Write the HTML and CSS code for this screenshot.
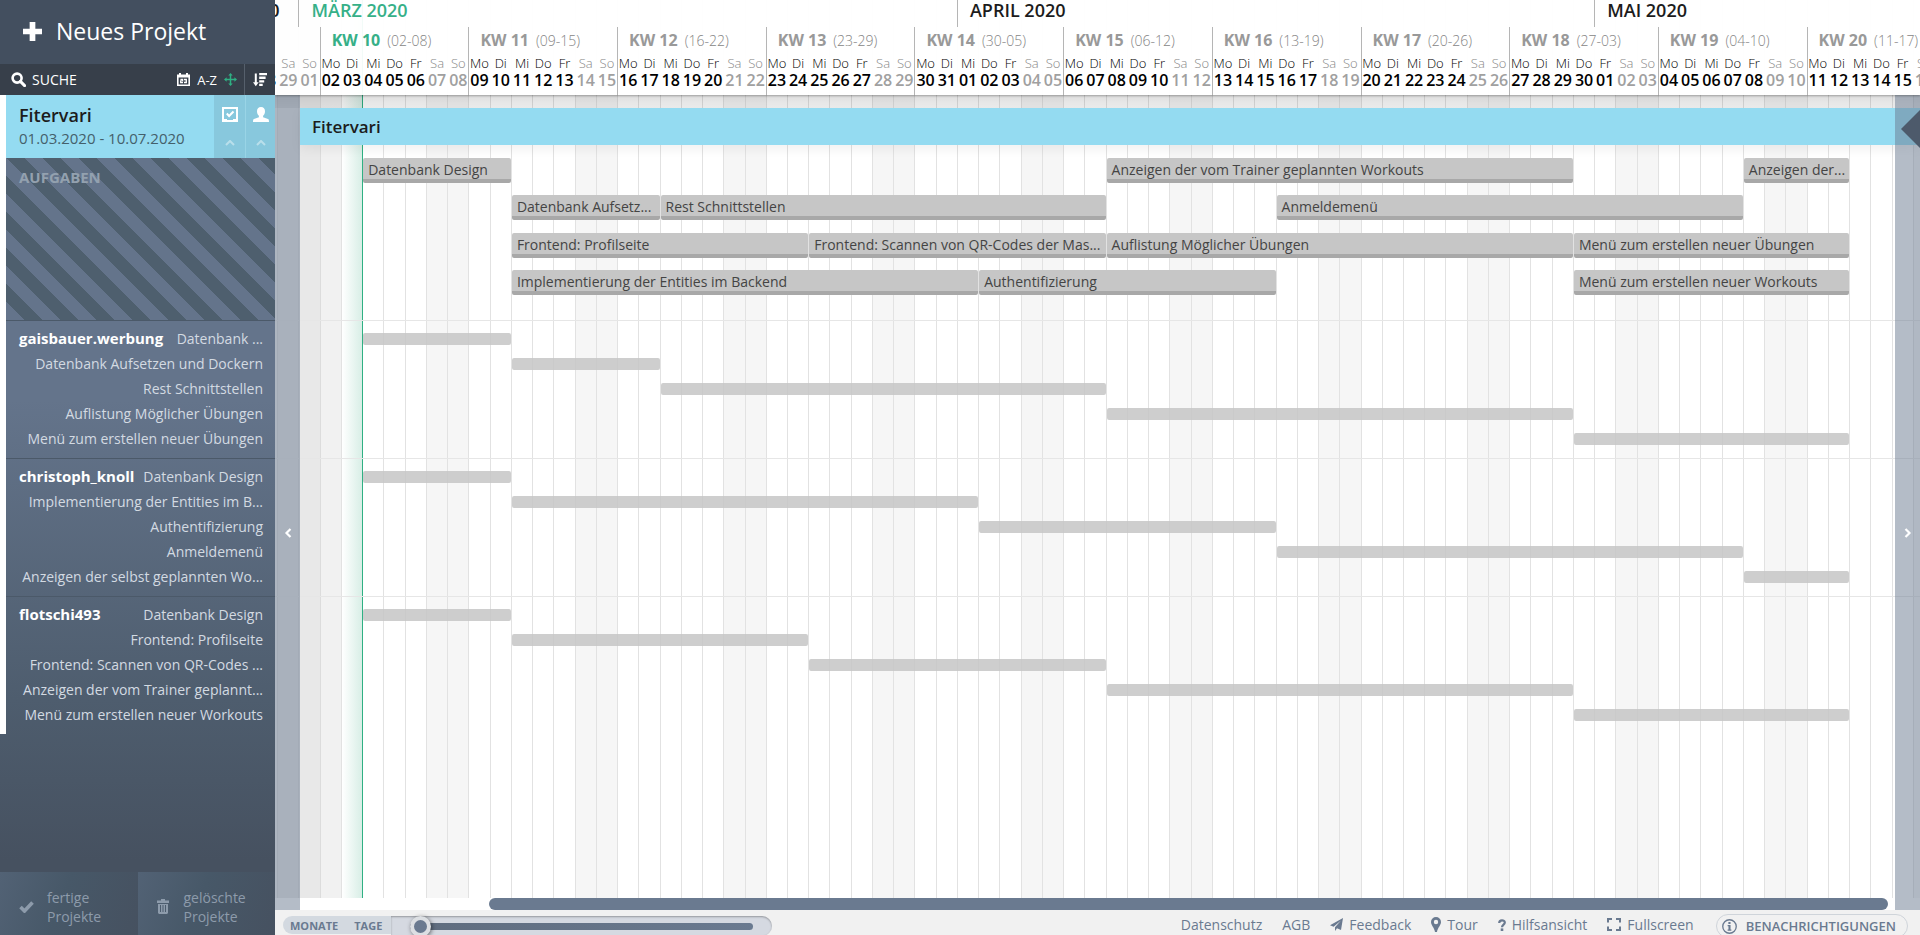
FILE: index.html
```html
<!DOCTYPE html>
<html lang="de">
<head>
<meta charset="utf-8">
<title>Fitervari – Projektplan</title>
<link rel="stylesheet" href="styles.css">
</head>
<body>
<div class="app">
  <aside class="sidebar">
    <button class="new-project" type="button">
      <svg class="plus" viewBox="0 0 20 20"><path d="M7 0h6v7h7v6h-7v7H7v-7H0V7h7z"/></svg>
      Neues Projekt
    </button>
    <div class="search">
      <label class="search-field">
        <svg viewBox="0 0 16 16" width="15" height="15"><circle cx="6.5" cy="6.5" r="4.8" fill="none" stroke="currentColor" stroke-width="2.8"/><path d="M10 10l4.5 4.5" stroke="currentColor" stroke-width="3.2" stroke-linecap="round"/></svg>
        <input type="text" placeholder="SUCHE" aria-label="Suche">
      </label>
      <button type="button" aria-label="Nach Datum sortieren">
        <svg viewBox="0 0 13 13" width="13" height="13"><path fill="currentColor" fill-rule="evenodd" d="M0 1.500h2V0h2v1.500h5V0h2v1.500h2V13H0zM1.600 4.600v6.800h9.800V4.600z"/><path d="M3.400 6.400h2.300v1.500H3.600v1.700h2.400M7 6.400h2.400v3.200H7M7.400 8h2" fill="none" stroke="currentColor" stroke-width="1.100"/></svg>
      </button>
      <button type="button">A-Z</button>
      <button class="active" type="button" aria-label="Manuell sortieren">
        <svg viewBox="0 0 14 14" width="13" height="13"><path fill="currentColor" d="M7 0l2.400 2.800H7.800v3.400h3.400V4.600L14 7l-2.800 2.400V7.800H7.800v3.400h1.600L7 14l-2.400-2.800h1.600V7.800H2.800v1.600L0 7l2.800-2.400v1.600h3.400V2.800H4.600z"/></svg>
      </button>
      <button class="sort" type="button" aria-label="Sortierung">
        <svg viewBox="0 0 14 14" width="14" height="14"><path fill="currentColor" d="M1.800 0.500h2v8.800h1.900L2.800 13.200 0 9.300h1.800zM6.200 0h7.800v2.300H6.200zM6.200 3.600h6.400v2.300H6.200zM6.200 7.200h5v2.300h-5zM6.200 10.800h3.500v2.300H6.200z"/></svg>
      </button>
    </div>

    <div class="project">
      <div class="project-head">
        <div class="project-info">
          <div class="project-name">Fitervari</div>
          <div class="project-dates">01.03.2020 - 10.07.2020</div>
        </div>
        <button class="toggle" type="button" aria-label="Aufgaben einklappen">
          <svg viewBox="0 0 16 15" width="16" height="15"><path fill="#fff" fill-rule="evenodd" d="M0 0h16v15H0zM2 2v10h3v1h6v-1h3V2z"/><path d="M4.800 6.500l2.300 2.500 4.400-4.500" fill="none" stroke="#fff" stroke-width="2"/></svg>
          <svg viewBox="0 0 10 6" width="10" height="6"><path d="M1 5l4-4 4 4" fill="none" stroke="#b9dfeb" stroke-width="2"/></svg>
        </button>
        <button class="toggle" type="button" aria-label="Personen einklappen">
          <svg viewBox="0 0 16 15" width="16" height="15"><path fill="#fff" d="M8 0c2.600 0 4 1.800 4 4.300 0 1.900-.8 3.700-1.900 4.500v1.400L15 12c.7.300 1 1 1 3H0c0-2 .3-2.700 1-3l4.900-1.800V8.800C4.800 8 4 6.200 4 4.300 4 1.800 5.400 0 8 0z"/></svg>
          <svg viewBox="0 0 10 6" width="10" height="6"><path d="M1 5l4-4 4 4" fill="none" stroke="#b9dfeb" stroke-width="2"/></svg>
        </button>
      </div>
      <div class="tasks-label">AUFGABEN</div>
      <section class="person">
        <h3>gaisbauer.werbung</h3>
        <ul>
          <li>Datenbank ...</li>
          <li>Datenbank Aufsetzen und Dockern</li>
          <li>Rest Schnittstellen</li>
          <li>Auflistung Möglicher Übungen</li>
          <li>Menü zum erstellen neuer Übungen</li>
        </ul>
      </section>
      <section class="person">
        <h3>christoph_knoll</h3>
        <ul>
          <li>Datenbank Design</li>
          <li>Implementierung der Entities im B...</li>
          <li>Authentifizierung</li>
          <li>Anmeldemenü</li>
          <li>Anzeigen der selbst geplannten Wo...</li>
        </ul>
      </section>
      <section class="person">
        <h3>flotschi493</h3>
        <ul>
          <li>Datenbank Design</li>
          <li>Frontend: Profilseite</li>
          <li>Frontend: Scannen von QR-Codes ...</li>
          <li>Anzeigen der vom Trainer geplannt...</li>
          <li>Menü zum erstellen neuer Workouts</li>
        </ul>
      </section>
    </div>

    <div class="archive">
      <button type="button">
        <svg viewBox="0 0 15 12" width="15" height="12"><path d="M1.500 6l4 4 8-8.500" fill="none" stroke="currentColor" stroke-width="3.600"/></svg>
        <span>fertige Projekte</span>
      </button>
      <button type="button">
        <svg viewBox="0 0 12 15" width="12" height="15"><path fill="currentColor" fill-rule="evenodd" d="M4 0h4v1.500h4V4H0V1.500h4zM1 5h10v9l-1 1H2l-1-1zM3 6v7h1V6zM5.500 6v7h1V6zM8 6v7h1V6z"/></svg>
        <span>gelöschte Projekte</span>
      </button>
    </div>
  </aside>

  <main class="main">
    <div class="timeline">
      <div class="days-bg track" id="days-bg"></div>

      <header class="calendar">
        <div class="months track" id="months"></div>
        <div class="weeks track" id="weeks"></div>
        <div class="days track" id="days"></div>
      </header>

      <div class="chart">
        <div class="project-bar">Fitervari</div>
        <div class="tasks track" id="tasks"></div>
        <div class="lanes track" data-person="0"></div>
        <div class="lanes track" data-person="1"></div>
        <div class="lanes track" data-person="2"></div>
      </div>

      <div class="scrollbar"><div class="thumb"></div></div>
      <button class="edge edge-left" type="button" aria-label="Zurück">
        <svg viewBox="0 0 8 10" width="8" height="10"><path d="M6.500 1L2.500 5l4 4" fill="none" stroke="#fff" stroke-width="2.200"/></svg>
      </button>
      <button class="edge edge-right" type="button" aria-label="Weiter">
        <svg viewBox="0 0 8 10" width="8" height="10"><path d="M1.500 1l4 4-4 4" fill="none" stroke="#fff" stroke-width="2.200"/></svg>
      </button>
      <div class="more-marker"></div>
    </div>

    <footer class="footer">
      <div class="zoom-control">
        <button type="button">MONATE</button>
        <button type="button">TAGE</button>
        <input type="range" min="0" max="100" value="0" aria-label="Zoomstufe">
      </div>
      <nav class="links">
        <a href="#">Datenschutz</a>
        <a href="#">AGB</a>
        <a href="#"><svg viewBox="0 0 13 13" width="13" height="13"><path fill="currentColor" d="M13 0l-2 12-4-1.800L5 13V9.300L11 2.500 3.600 8.800 0 7.300z"/></svg>Feedback</a>
        <a href="#"><svg viewBox="0 0 10 15" width="10" height="15"><path fill="currentColor" fill-rule="evenodd" d="M5 0a5 5 0 0 1 5 5c0 3-3.500 6-4 10H4C3.500 11 0 8 0 5a5 5 0 0 1 5-5zm0 2.800a2.200 2.200 0 1 0 0 4.400 2.200 2.200 0 0 0 0-4.400z"/></svg>Tour</a>
        <a href="#"><svg viewBox="0 0 8 12" width="8" height="12"><path d="M1.200 4C1.200 0.600 6.800 0.600 6.800 3.600 6.800 5.600 4 5.600 4 8.200" fill="none" stroke="currentColor" stroke-width="2.200"/><path fill="currentColor" d="M2.700 9.400h2.600V12H2.700z"/></svg>Hilfsansicht</a>
        <a href="#"><svg viewBox="0 0 14 13" width="14" height="13"><path d="M1 4.500V1h4M9 1h4v3.500M13 8.500V12H9M5 12H1V8.500" fill="none" stroke="currentColor" stroke-width="2"/></svg>Fullscreen</a>
      </nav>
      <button class="notifications" type="button">
        <svg viewBox="0 0 16 16" width="15" height="15"><circle cx="8" cy="8" r="7.200" fill="none" stroke="currentColor" stroke-width="1.400"/><path fill="currentColor" d="M6.800 3.200h2.300v2H6.800zM6 6.300h3.100v4.800H10v1.300H6v-1.300h.9V7.600H6z"/></svg>
        BENACHRICHTIGUNGEN
      </button>
    </footer>
  </main>
</div>
<script src="script.js"></script>
</body>
</html>
```

FILE: styles.css
```css
* { box-sizing: border-box; }

body {
  margin: 0;
  font-family: "Open Sans", "Noto Sans", sans-serif;
  font-size: 14px;
  color: #1c1c1c;
}

button {
  margin: 0;
  padding: 0;
  border: 0;
  background: none;
  color: inherit;
  font: inherit;
}

svg { display: block; flex: none; }

.app {
  display: flex;
  height: 100vh;
  overflow: hidden;
}

/* Sidebar */

.sidebar {
  display: flex;
  flex-direction: column;
  flex: none;
  width: 275px;
  background: linear-gradient(#64748b 0, #64748b 400px, #4e5d6e 700px, #465160 860px);
}

.new-project {
  display: flex;
  align-items: center;
  gap: 14px;
  height: 64px;
  padding: 0 23px 2px;
  background: #434f5f;
  color: #fff;
  font-size: 23px;
}

.plus { width: 19px; height: 19px; fill: #fff; }

.search {
  display: flex;
  align-items: stretch;
  gap: 7px;
  height: 31px;
  background: #373f4a;
  color: #fff;
  font-size: 13px;
}

.search button { display: flex; align-items: center; }
.search .active { color: #2fb083; }

.search .sort {
  width: 31px;
  justify-content: center;
  border-left: 1px solid #56606c;
}

.search-field {
  display: flex;
  flex: 1;
  align-items: center;
  gap: 6px;
  min-width: 0;
  padding-left: 11px;
}

.search-field input {
  width: 100%;
  min-width: 0;
  padding: 0;
  border: 0;
  outline: 0;
  background: none;
  color: #fff;
  font: inherit;
  font-size: 14px;
}

.search-field input::placeholder { color: #fff; opacity: 1; }

.project { border-left: 6px solid #fff; }

.project-head {
  display: flex;
  height: 63px;
  background: #94dbf1;
}

.project-info { flex: 1; padding: 8px 13px; }

.project-name {
  font-size: 18px;
  font-weight: 600;
  line-height: 24px;
}

.project-dates {
  color: #44606b;
  font-size: 15px;
  line-height: 22px;
}

.toggle {
  display: flex;
  flex-direction: column;
  align-items: center;
  justify-content: space-between;
  width: 31px;
  padding: 12px 0;
  background: #88c8dd;
}

.toggle + .toggle { width: 30px; border-left: 1px solid #99d4e6; }

.tasks-label {
  height: 162px;
  padding: 9px 13px;
  background: linear-gradient(45deg, #4e5f6e 25%, #64748b 25%, #64748b 50%, #4e5f6e 50%, #4e5f6e 75%, #64748b 75%) 0 0 / 36px 36px;
  color: #93a1af;
  font-size: 15px;
  font-weight: 700;
  line-height: 20px;
}

.person {
  display: grid;
  grid-template-columns: auto 1fr;
  height: 138px;
  padding: 5px 12px 7px 13px;
  border-top: 1px solid #4b5969;
}

.person h3 {
  grid-area: 1 / 1;
  margin: 0;
  color: #fff;
  font-size: 15px;
  font-weight: 700;
  line-height: 25px;
}

.person ul {
  display: contents;
  list-style: none;
}

.person li {
  grid-column: 1 / -1;
  color: #d3dae2;
  line-height: 25px;
  text-align: right;
  white-space: nowrap;
}

.person li:first-child { grid-area: 1 / 2; }

.archive {
  display: flex;
  height: 63px;
  margin-top: auto;
  color: #8d9bab;
}

.archive button {
  display: flex;
  flex: 1;
  align-items: center;
  gap: 13px;
  padding: 6px 19px 0;
  background: linear-gradient(110deg, #526275, #475868 45%, #465160);
  line-height: 19px;
  text-align: left;
}

.archive button + button { gap: 15px; }

/* Timeline */

.main {
  display: flex;
  flex: 1;
  flex-direction: column;
  min-width: 0;
}

.timeline {
  position: relative;
  display: flex;
  flex: 1;
  flex-direction: column;
  min-height: 0;
  overflow: hidden;
  background: #fff;
}

.track {
  display: grid;
  grid-template-columns: repeat(79, minmax(0, 1fr));
  margin: 0 -14px 0 -19px;
}

.days-bg {
  position: absolute;
  inset: 0 0 12px;
}

.day-column { border-left: 1px solid #e2e2e2; }
.day-column.weekend { background: #f6f6f6; }
.day-column.past { background: #f1f1f1; border-color: #dcdcdc; }
.day-column.past.weekend { background: #e8e8e8; }
.day-column.today { background: linear-gradient(90deg, #fff, #d8eee6); }
.day-column.today + .day-column { border-left-color: #2fb083; }

.calendar {
  position: relative;
  z-index: 2;
  display: grid;
  grid-template-rows: 27px 26px 42px;
  background: rgba(255, 255, 255, 0.94);
  box-shadow: 0 1px 2px rgba(0, 0, 0, 0.3);
}

.month {
  padding-left: 12px;
  border-left: 1px solid #b5b5b5;
  font-size: 18px;
  font-weight: 600;
  line-height: 21px;
  white-space: nowrap;
}

.month.clipped {
  display: flex;
  justify-content: flex-end;
  padding-right: 19px;
}

.week {
  padding-left: 11px;
  border-left: 1px solid #b5b5b5;
  color: #858585;
  font-size: 14px;
  font-weight: 300;
  line-height: 26px;
  white-space: nowrap;
}

.week b {
  margin-right: 7px;
  color: #999;
  font-size: 16px;
  font-weight: 700;
}

.month.current, .week.current b { color: #36b088; }

.day {
  display: flex;
  flex-direction: column;
  align-items: center;
  padding-top: 2px;
  border-left: 1px solid transparent;
  color: #000;
  font-size: 13px;
  line-height: 17px;
}

.day.monday { border-color: #b5b5b5; }
.day b { font-size: 16px; font-weight: 600; }
.day span { font-weight: 300; }
.day.weekend { color: #a0a0a0; }
.day.weekend span { color: #888; }

.chart {
  position: relative;
  flex: 1;
  min-height: 0;
  overflow: hidden;
  padding-top: 13px;
  background: linear-gradient(rgba(0, 0, 0, 0.13), rgba(0, 0, 0, 0.07) 13px, transparent 13px);
}

.project-bar {
  position: relative;
  height: 37px;
  margin-left: 25px;
  padding-left: 12px;
  background: #94dbf1;
  box-shadow: 0 4px 12px rgba(0, 0, 0, 0.06);
  font-size: 17px;
  font-weight: 600;
  line-height: 37px;
}

.tasks {
  grid-template-rows: 37px 38px 37px 25px;
  align-items: start;
  height: 175px;
  padding-top: 13px;
}

.task {
  position: relative;
  height: 25px;
  margin-left: 1px;
  padding: 0 2px 0 5px;
  overflow: hidden;
  border-bottom: 4px solid #a8a8a8;
  border-radius: 2px;
  background: #c6c6c6;
  color: #444;
  line-height: 24px;
  text-overflow: ellipsis;
  white-space: nowrap;
}

.lanes {
  grid-template-rows: repeat(5, 25px);
  align-items: center;
  height: 138px;
  padding-top: 5px;
  border-top: 1px solid #e6e6e6;
}

.lane-bar {
  height: 12px;
  margin-left: 1px;
  border-radius: 2px;
  background: rgba(198, 198, 198, 0.85);
}

.scrollbar {
  position: relative;
  height: 12px;
  padding: 0 32px 0 214px;
  background: #fff;
}

.thumb {
  height: 12px;
  border-radius: 6px;
  background: #6a7a90;
}

.edge {
  position: absolute;
  z-index: 1;
  top: 95px;
  bottom: 0;
  display: flex;
  align-items: center;
  justify-content: center;
  width: 25px;
  background: rgba(106, 122, 144, 0.5);
}

.edge svg { margin-top: 61px; }
.edge-left { left: 0; }
.edge-right { right: 0; }

.more-marker {
  position: absolute;
  z-index: 1;
  top: 110px;
  right: 0;
  width: 19px;
  height: 38px;
  background: #4d5a6b;
  clip-path: polygon(0 50%, 100% 0, 100% 100%);
}

/* Footer */

.footer {
  display: flex;
  align-items: flex-start;
  height: 25px;
  padding: 0 12px 0 8px;
  overflow: hidden;
  background: #f1f1f1;
  color: #6a7a90;
}

.zoom-control {
  display: flex;
  height: 18px;
  margin-top: 6px;
}

.zoom-control button {
  padding: 0 9px 0 7px;
  background: #d3d9e0;
  font-size: 11px;
  font-weight: 700;
  line-height: 20px;
}

.zoom-control button:first-child { border-radius: 9px 0 0 9px; }

.zoom-control input {
  width: 381px;
  height: 20px;
  margin: 0;
  padding: 0 19px;
  appearance: none;
  border-radius: 0 10px 10px 0;
  background: #d5d9e1;
  box-shadow: inset 0 1px 2px rgba(0, 0, 0, 0.3);
}

.zoom-control input::-webkit-slider-runnable-track {
  height: 7px;
  border-radius: 4px;
  background: linear-gradient(90deg, #5f6c7e, #6a7a90);
}

.zoom-control input::-webkit-slider-thumb {
  width: 21px;
  height: 21px;
  margin-top: -7px;
  appearance: none;
  border: 4px solid #dcdfe3;
  border-radius: 50%;
  background: #6a7a90;
  box-shadow: 1px 1px 4px rgba(0, 0, 0, 0.5);
}

.links {
  display: flex;
  gap: 20px;
  margin-left: auto;
}

.links a {
  display: flex;
  align-items: center;
  gap: 6px;
  height: 29px;
  color: inherit;
  text-decoration: none;
}

.notifications {
  display: flex;
  align-items: center;
  gap: 9px;
  height: 24px;
  margin: 4px 0 0 22px;
  padding: 0 11px 0 5px;
  border: 1px solid #cfd4da;
  border-radius: 12px;
  font-size: 13px;
  font-weight: 600;
}
```

FILE: script.js
```js
const DAY_MS = 86400000;
const START = Date.UTC(2020, 1, 28);
const TODAY = 4;
const DAY_COUNT = 79;
const DAY_NAMES = ["So", "Mo", "Di", "Mi", "Do", "Fr", "Sa"];

const pad = (n) => String(n).padStart(2, "0");
const dateAt = (i) => new Date(START + i * DAY_MS);

function add(parent, tag, className, column, text) {
  const el = document.createElement(tag);
  el.className = className;
  if (column) el.style.gridColumn = column;
  if (text) el.textContent = text;
  parent.append(el);
  return el;
}

const byId = (id) => document.getElementById(id);

/* Months: [label, first column, end column, modifier] */
[
  ["FEBRUAR 2020", 1, 3, "clipped"],
  ["MÄRZ 2020", 3, 34, "current"],
  ["APRIL 2020", 34, 64, ""],
  ["MAI 2020", 64, 80, ""]
].forEach(([label, from, to, mod]) =>
  add(byId("months"), "div", "month " + mod, `${from} / ${to}`, label));

for (let week = 10; week <= 20; week++) {
  const first = 3 + (week - 10) * 7;
  const end = Math.min(first + 8, DAY_COUNT + 1);
  const el = add(byId("weeks"), "div", week === 10 ? "week current" : "week", `${first + 1} / ${end}`);
  add(el, "b", "", "", "KW " + week);
  el.append(`(${pad(dateAt(first).getUTCDate())}-${pad(dateAt(first + 6).getUTCDate())})`);
}

for (let i = 0; i < DAY_COUNT; i++) {
  const date = dateAt(i);
  const weekday = date.getUTCDay();
  const weekend = weekday === 0 || weekday === 6 ? " weekend" : "";
  const state = i < TODAY ? " past" : i === TODAY ? " today" : "";
  add(byId("days-bg"), "div", "day-column" + weekend + state);
  const day = add(byId("days"), "div", "day" + weekend + (weekday === 1 ? " monday" : ""));
  add(day, "span", "", "", DAY_NAMES[weekday]);
  add(day, "b", "", "", pad(date.getUTCDate()));
}

/* Tasks: [row, first column, end column, label] */
[
  [1, 6, 13, "Datenbank Design"],
  [1, 41, 63, "Anzeigen der vom Trainer geplannten Workouts"],
  [1, 71, 76, "Anzeigen der..."],
  [2, 13, 20, "Datenbank Aufsetz..."],
  [2, 20, 41, "Rest Schnittstellen"],
  [2, 49, 71, "Anmeldemenü"],
  [3, 13, 27, "Frontend: Profilseite"],
  [3, 27, 41, "Frontend: Scannen von QR-Codes der Mas..."],
  [3, 41, 63, "Auflistung Möglicher Übungen"],
  [3, 63, 76, "Menü zum erstellen neuer Übungen"],
  [4, 13, 35, "Implementierung der Entities im Backend"],
  [4, 35, 49, "Authentifizierung"],
  [4, 63, 76, "Menü zum erstellen neuer Workouts"]
].forEach(([row, from, to, label]) => {
  add(byId("tasks"), "div", "task", `${from} / ${to}`, label).style.gridRow = row;
});

/* One bar per row for every person */
const lanes = [
  [[6, 13], [13, 20], [20, 41], [41, 63], [63, 76]],
  [[6, 13], [13, 35], [35, 49], [49, 71], [71, 76]],
  [[6, 13], [13, 27], [27, 41], [41, 63], [63, 76]]
];
document.querySelectorAll(".lanes").forEach((el) => {
  lanes[el.dataset.person].forEach(([from, to], row) => {
    add(el, "div", "lane-bar", `${from} / ${to}`).style.gridRow = row + 1;
  });
});
```
